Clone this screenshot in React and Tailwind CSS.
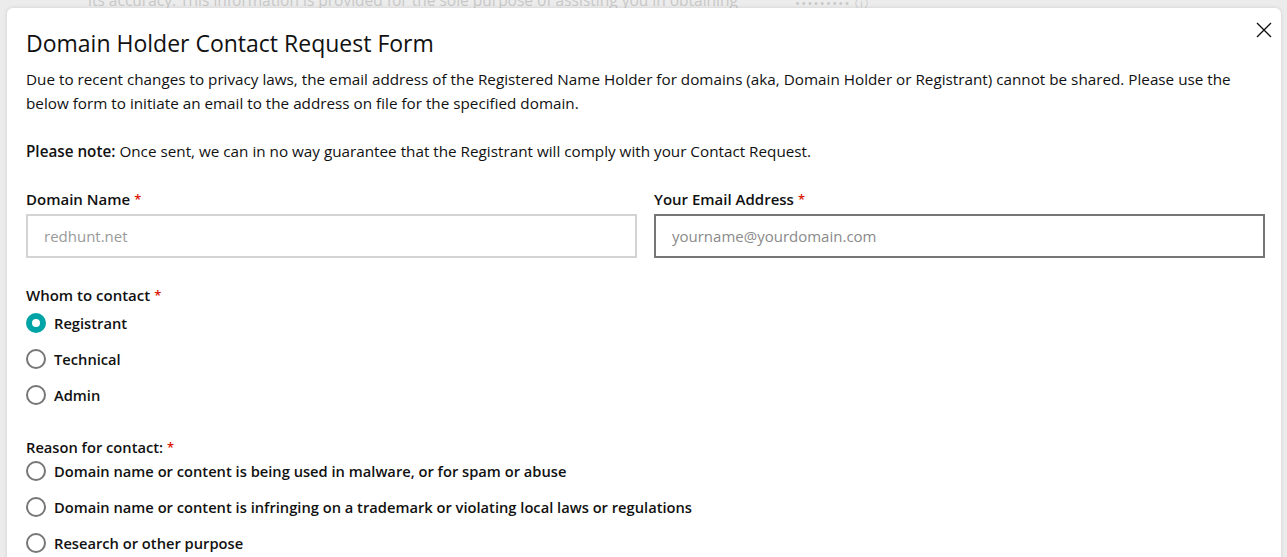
import React, { useState } from 'react';

const Required = () => <span className="text-[#db1802] ml-1 text-[13px] align-top">*</span>;

const Radio = ({ checked, label, onChange }) => (
  <label className="flex items-center h-[36px] cursor-pointer" onClick={onChange}>
    {checked ? (
      <span className="w-[20px] h-[20px] rounded-full bg-[#00a4a6] flex items-center justify-center shrink-0">
        <span className="w-[8px] h-[8px] rounded-full bg-white" />
      </span>
    ) : (
      <span className="w-[20px] h-[20px] rounded-full border-2 border-[#767676] bg-white shrink-0" />
    )}
    <span className="ml-[8px] text-[14.7px] font-semibold text-[#111]">{label}</span>
  </label>
);

export default function App() {
  const [whom, setWhom] = useState('Registrant');
  const [reason, setReason] = useState(null);

  const reasons = [
    'Domain name or content is being used in malware, or for spam or abuse',
    'Domain name or content is infringing on a trademark or violating local laws or regulations',
    'Research or other purpose',
  ];

  return (
    <div className="h-[557px] overflow-hidden bg-[#ececec] relative font-['Open_Sans',sans-serif]">
      {/* page behind the modal */}
      <div className="absolute top-[-11px] left-[88px] text-[15.5px] text-[#c8c8c8] whitespace-nowrap">
        its accuracy. This information is provided for the sole purpose of assisting you in obtaining
      </div>
      <div className="absolute top-[-6px] left-[795px] text-[13px] text-[#c8c8c8] tracking-widest whitespace-nowrap">
        ••••••••• ⓘ
      </div>

      <div className="pt-[8px] pl-[7px] pr-[6px] relative">
        <div className="bg-white rounded-t-[6px] shadow-[0_0_4px_rgba(0,0,0,0.12)] pl-[19px] pr-[16px] pt-[19px] h-[600px] relative">
          <button className="absolute right-[9px] top-[14px] text-[#111]">
            <svg width="16" height="16" viewBox="0 0 16 16" fill="none" stroke="currentColor" strokeWidth="1.4">
              <path d="M1 1L15 15M15 1L1 15" />
            </svg>
          </button>

          <h1 className="text-[23px] leading-[32px] text-[#111]">Domain Holder Contact Request Form</h1>

          <p className="mt-[8px] pr-[12px] text-[15.25px] leading-[24px] text-[#111]">
            Due to recent changes to privacy laws, the email address of the Registered Name Holder for domains (aka, Domain Holder or Registrant) cannot be shared. Please use the below form to initiate an email to the address on file for the specified domain.
          </p>
          <p className="mt-[24px] text-[15.25px] leading-[24px] text-[#111]">
            <span className="font-semibold">Please note:</span> Once sent, we can in no way guarantee that the Registrant will comply with your Contact Request.
          </p>

          <div className="grid grid-cols-2 gap-x-[17px] mt-[24px]">
            <div>
              <div className="text-[15px] leading-[24px] font-semibold text-[#111]">
                Domain Name<Required />
              </div>
              <input
                disabled
                value="redhunt.net"
                readOnly
                className="mt-[3px] w-full h-[44px] border-2 border-[#d4d4d4] bg-white px-[16px] text-[15px] text-[#9a9a9a] outline-none"
              />
            </div>
            <div>
              <div className="text-[15px] leading-[24px] font-semibold text-[#111]">
                Your Email Address<Required />
              </div>
              <input
                placeholder="yourname@yourdomain.com"
                className="mt-[3px] w-full h-[44px] border-2 border-[#767676] bg-white px-[16px] text-[15px] text-[#111] placeholder:text-[#8a8a8a] outline-none"
              />
            </div>
          </div>

          <div className="mt-[25px] text-[15px] leading-[24px] font-semibold text-[#111]">
            Whom to contact<Required />
          </div>
          <div className="flex flex-col mt-[-2px]">
            {['Registrant', 'Technical', 'Admin'].map((w) => (
              <Radio key={w} label={w} checked={whom === w} onChange={() => setWhom(w)} />
            ))}
          </div>

          <div className="mt-[22px] text-[14.7px] leading-[24px] font-semibold text-[#111]">
            Reason for contact:<Required />
          </div>
          <div className="flex flex-col mt-[-6px]">
            {reasons.map((r) => (
              <Radio key={r} label={r} checked={reason === r} onChange={() => setReason(r)} />
            ))}
          </div>
        </div>
      </div>
    </div>
  );
}
